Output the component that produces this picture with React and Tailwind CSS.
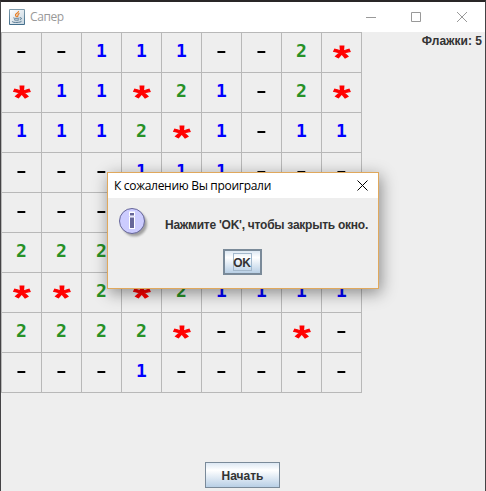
import React from "react";

const board = [
  "--111--2*",
  "*11*21-2*",
  "1112*1-11",
  "---111---",
  "---------",
  "222------",
  "**2*21111",
  "2222*--*-",
  "---1-----",
];

function Cell({ value }) {
  const base =
    "flex h-10 w-10 items-center justify-center border-r border-b border-[#b8b8b8] leading-none";
  if (value === "-")
    return (
      <div className={base}>
        <span className="relative -top-[1.5px] scale-x-[1.55] scale-y-[0.95] font-['Liberation_Mono',monospace] text-[18px] font-bold text-black">-</span>
      </div>
    );
  if (value === "*")
    return (
      <div className={base}>
        <span className="relative top-[4px] scale-x-[1.25] scale-y-[0.9] font-[Roboto,sans-serif] text-[30px] font-bold text-[#ff0000] [-webkit-text-stroke:1.1px_#ff0000]">*</span>
      </div>
    );
  return (
    <div className={base}>
      <span
        className={
          "relative -top-[2px] font-['DejaVu_Sans_Mono',monospace] text-[18px] font-bold " +
          (value === "1" ? "text-[#0000ff]" : "text-[#279127]")
        }
      >
        {value}
      </span>
    </div>
  );
}

function JavaIcon() {
  return (
    <svg width="16" height="16" viewBox="0 0 16 16" fill="none">
      <defs>
        <linearGradient id="tile" x1="0" y1="0" x2="0" y2="1">
          <stop offset="0" stopColor="#819eae" />
          <stop offset="1" stopColor="#426d8b" />
        </linearGradient>
        <linearGradient id="face" x1="0" y1="0" x2="1" y2="1">
          <stop offset="0" stopColor="#ffffff" />
          <stop offset="1" stopColor="#c6d5df" />
        </linearGradient>
      </defs>
      <rect width="16" height="16" rx="1" fill="url(#tile)" />
      <rect x="1" y="1" width="14" height="14" fill="url(#face)" />
      <path d="M9.5 2C10 4 6 4.5 6.5 6.2C6.7 7 7.6 7.3 7.5 8.3M10.5 4.4C8 5.4 9.6 6.5 8.3 8" stroke="#e77c22" strokeWidth="1.2" />
      <path d="M4.5 8.7C4 9.6 10 9.6 10.5 8.9M5 10.6C6 11.4 9 11.4 10.2 10.7M11 8.8C13.3 8.5 12.6 10.4 11 10.8M3.5 12.2C2 13.8 11.5 13.8 12.5 12.3" stroke="#54768f" strokeWidth="1" />
    </svg>
  );
}

function InfoIcon() {
  return (
    <svg width="32" height="32" viewBox="0 0 32 32" fill="none">
      <defs>
        <filter id="soft" x="-20%" y="-20%" width="150%" height="150%">
          <feGaussianBlur stdDeviation="1.2" />
        </filter>
      </defs>
      <circle cx="15.5" cy="15.8" r="12.5" fill="#777" opacity=".65" filter="url(#soft)" />
      <circle cx="13" cy="13" r="12.5" fill="#ccccff" stroke="#666699" />
      <path d="M10 3.5h6v4.5h-6zM10 8.5h6v12.5h-6z" fill="#fff" />
      <path d="M11 5h4v2.5h-4zM11 9.5h4v10.5h-4z" fill="#666699" />
    </svg>
  );
}

function Dialog() {
  return (
    <div className="absolute top-[170px] left-[106px] flex h-[117px] w-[272px] flex-col border border-[#e0a85c] bg-[#eeeeee] shadow-[2px_4px_15px_rgba(0,0,0,0.42)]">
      <div className="flex h-[25px] shrink-0 items-center justify-between bg-white pr-[10px] pl-[6px]">
        <span className="whitespace-nowrap font-['Open_Sans',sans-serif] text-[12px] leading-none tracking-[-0.3px] text-black">
          К сожалению Вы проиграли
        </span>
        <svg width="11" height="11" viewBox="0 0 11 11" stroke="#000">
          <path d="M.5.5l10 10M10.5.5l-10 10" />
        </svg>
      </div>
      <div className="flex h-[51px] pt-[10px] pl-[11px]">
        <InfoIcon />
        <span className="mt-[10px] ml-[14px] whitespace-nowrap font-['Liberation_Sans',sans-serif] text-[12px] leading-[15px] font-bold tracking-[-0.25px] text-[#333333]">
          Нажмите 'OK', чтобы закрыть окно.
        </span>
      </div>
      <div className="flex justify-center pr-[2px]">
        <button className="flex h-[26px] w-[39px] items-center justify-center border-2 border-[#7a8a99] bg-linear-to-b from-[#dde8f3] via-white via-30% to-[#b8cfe5]">
          <span className="flex h-[18px] w-[19px] items-center justify-center border border-[#a3b8cc] pt-px font-['Liberation_Sans',sans-serif] text-[12px] leading-none font-bold tracking-[-0.3px] text-[#333333]">
            OK
          </span>
        </button>
      </div>
    </div>
  );
}

export default function App() {
  return (
    <div className="relative flex h-[491px] w-[486px] flex-col overflow-hidden border-x border-t-2 border-x-[#444345] border-t-[#292627] bg-[#eeeeee]">
      <header className="flex h-[30px] shrink-0 items-center bg-white pr-[1px] pl-2">
        <JavaIcon />
        <span className="ml-[5px] font-['Open_Sans',sans-serif] text-[12px] leading-none tracking-[-0.4px] text-[#999999]">Сапер</span>
        <svg className="ml-auto" width="120" height="12" viewBox="0 0 120 12" fill="none" stroke="#999">
          <path d="M2 6.5h10M47.5 1.5h9v9h-9zM93 1l10 10M103 1L93 11" />
        </svg>
      </header>
      <main className="flex justify-between">
        <div className="grid w-[361px] grid-cols-9 border-t border-l border-[#b8b8b8]">
          {board.flatMap((row, y) => [...row].map((v, x) => <Cell key={`${y}-${x}`} value={v} />))}
        </div>
        <div className="mt-[2px] mr-[3px] font-['Liberation_Sans',sans-serif] text-[12px] leading-[15px] font-bold text-[#333333]">
          Флажки: 5
        </div>
      </main>
      <footer className="mt-[69px] flex justify-center pr-[2px]">
        <button className="flex h-[26px] w-[75px] items-center justify-center border border-[#7a8a99] bg-linear-to-b from-[#dde8f3] via-white via-30% to-[#b8cfe5] pt-px pl-px font-['Liberation_Sans',sans-serif] text-[12px] leading-none font-bold text-[#333333]">
          Начать
        </button>
      </footer>
      <Dialog />
    </div>
  );
}
